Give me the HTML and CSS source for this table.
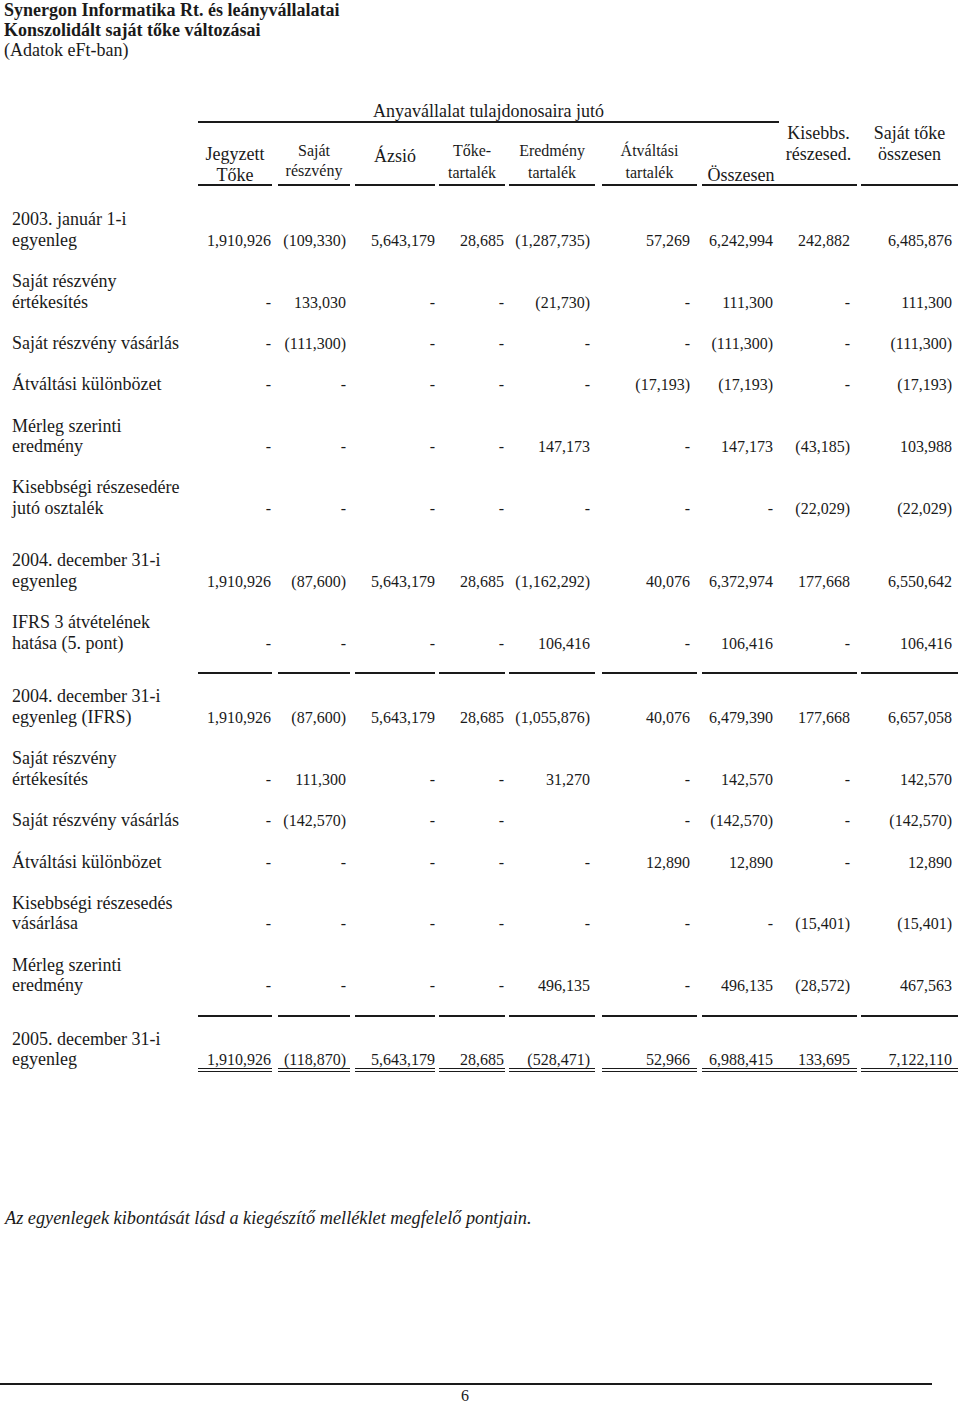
FILE: index.html
```html
<!DOCTYPE html>
<html lang="hu">
<head>
<meta charset="utf-8">
<title>Synergon Informatika Rt. – Konszolidált saját tőke változásai</title>
<link rel="stylesheet" href="styles.css">
</head>
<body>
<div class="page">
  <header class="doc-head">
    <div class="doc-title">Synergon Informatika Rt. és leányvállalatai</div>
    <div class="doc-title">Konszolidált saját tőke változásai</div>
    <div class="doc-unit">(Adatok eFt-ban)</div>
  </header>

  <section class="sheet">
    <div class="thead">
      <div class="th-group">Anyavállalat tulajdonosaira jutó</div>
      <div class="th c1 big low"><span>Jegyzett<br>Tőke</span></div>
      <div class="th c2 small"><span>Saját<br>részvény</span></div>
      <div class="th c3 big single"><span>Ázsió</span></div>
      <div class="th c4 small tall"><span>Tőke-<br>tartalék</span></div>
      <div class="th c5 small tall"><span>Eredmény<br>tartalék</span></div>
      <div class="th c6 small tall"><span>Átváltási<br>tartalék</span></div>
      <div class="th c7 big low"><span>Összesen</span></div>
      <div class="th c8 big top"><span>Kisebbs.<br>részesed.</span></div>
      <div class="th c9 big top"><span>Saját tőke<br>összesen</span></div>
    </div>

    <div class="tbody">
      <div class="row">
        <div class="label">2003. január 1-i<br>egyenleg</div>
        <div class="num c1">1,910,926</div><div class="num c2">(109,330)</div><div class="num c3">5,643,179</div><div class="num c4">28,685</div><div class="num c5">(1,287,735)</div><div class="num c6">57,269</div><div class="num c7">6,242,994</div><div class="num c8">242,882</div><div class="num c9">6,485,876</div>
      </div>
      <div class="row">
        <div class="label">Saját részvény<br>értékesítés</div>
        <div class="num c1">-</div><div class="num c2">133,030</div><div class="num c3">-</div><div class="num c4">-</div><div class="num c5">(21,730)</div><div class="num c6">-</div><div class="num c7">111,300</div><div class="num c8">-</div><div class="num c9">111,300</div>
      </div>
      <div class="row">
        <div class="label">Saját részvény vásárlás</div>
        <div class="num c1">-</div><div class="num c2">(111,300)</div><div class="num c3">-</div><div class="num c4">-</div><div class="num c5">-</div><div class="num c6">-</div><div class="num c7">(111,300)</div><div class="num c8">-</div><div class="num c9">(111,300)</div>
      </div>
      <div class="row">
        <div class="label">Átváltási különbözet</div>
        <div class="num c1">-</div><div class="num c2">-</div><div class="num c3">-</div><div class="num c4">-</div><div class="num c5">-</div><div class="num c6">(17,193)</div><div class="num c7">(17,193)</div><div class="num c8">-</div><div class="num c9">(17,193)</div>
      </div>
      <div class="row">
        <div class="label">Mérleg szerinti<br>eredmény</div>
        <div class="num c1">-</div><div class="num c2">-</div><div class="num c3">-</div><div class="num c4">-</div><div class="num c5">147,173</div><div class="num c6">-</div><div class="num c7">147,173</div><div class="num c8">(43,185)</div><div class="num c9">103,988</div>
      </div>
      <div class="row">
        <div class="label">Kisebbségi részesedére<br>jutó osztalék</div>
        <div class="num c1">-</div><div class="num c2">-</div><div class="num c3">-</div><div class="num c4">-</div><div class="num c5">-</div><div class="num c6">-</div><div class="num c7">-</div><div class="num c8">(22,029)</div><div class="num c9">(22,029)</div>
      </div>
      <div class="row spaced">
        <div class="label">2004. december 31-i<br>egyenleg</div>
        <div class="num c1">1,910,926</div><div class="num c2">(87,600)</div><div class="num c3">5,643,179</div><div class="num c4">28,685</div><div class="num c5">(1,162,292)</div><div class="num c6">40,076</div><div class="num c7">6,372,974</div><div class="num c8">177,668</div><div class="num c9">6,550,642</div>
      </div>
      <div class="row">
        <div class="label">IFRS 3 átvételének<br>hatása (5. pont)</div>
        <div class="num c1">-</div><div class="num c2">-</div><div class="num c3">-</div><div class="num c4">-</div><div class="num c5">106,416</div><div class="num c6">-</div><div class="num c7">106,416</div><div class="num c8">-</div><div class="num c9">106,416</div>
      </div>
      <div class="row rule">
        <div class="label"></div>
        <div class="cell lined c1"></div><div class="cell lined c2"></div><div class="cell lined c3"></div><div class="cell lined c4"></div><div class="cell lined c5"></div><div class="cell lined c6"></div><div class="cell lined c7"></div><div class="cell lined c8"></div><div class="cell lined c9"></div>
      </div>
      <div class="row">
        <div class="label">2004. december 31-i<br>egyenleg (IFRS)</div>
        <div class="num c1">1,910,926</div><div class="num c2">(87,600)</div><div class="num c3">5,643,179</div><div class="num c4">28,685</div><div class="num c5">(1,055,876)</div><div class="num c6">40,076</div><div class="num c7">6,479,390</div><div class="num c8">177,668</div><div class="num c9">6,657,058</div>
      </div>
      <div class="row">
        <div class="label">Saját részvény<br>értékesítés</div>
        <div class="num c1">-</div><div class="num c2">111,300</div><div class="num c3">-</div><div class="num c4">-</div><div class="num c5">31,270</div><div class="num c6">-</div><div class="num c7">142,570</div><div class="num c8">-</div><div class="num c9">142,570</div>
      </div>
      <div class="row">
        <div class="label">Saját részvény vásárlás</div>
        <div class="num c1">-</div><div class="num c2">(142,570)</div><div class="num c3">-</div><div class="num c4">-</div><div class="num c5"></div><div class="num c6">-</div><div class="num c7">(142,570)</div><div class="num c8">-</div><div class="num c9">(142,570)</div>
      </div>
      <div class="row">
        <div class="label">Átváltási különbözet</div>
        <div class="num c1">-</div><div class="num c2">-</div><div class="num c3">-</div><div class="num c4">-</div><div class="num c5">-</div><div class="num c6">12,890</div><div class="num c7">12,890</div><div class="num c8">-</div><div class="num c9">12,890</div>
      </div>
      <div class="row">
        <div class="label">Kisebbségi részesedés<br>vásárlása</div>
        <div class="num c1">-</div><div class="num c2">-</div><div class="num c3">-</div><div class="num c4">-</div><div class="num c5">-</div><div class="num c6">-</div><div class="num c7">-</div><div class="num c8">(15,401)</div><div class="num c9">(15,401)</div>
      </div>
      <div class="row">
        <div class="label">Mérleg szerinti<br>eredmény</div>
        <div class="num c1">-</div><div class="num c2">-</div><div class="num c3">-</div><div class="num c4">-</div><div class="num c5">496,135</div><div class="num c6">-</div><div class="num c7">496,135</div><div class="num c8">(28,572)</div><div class="num c9">467,563</div>
      </div>
      <div class="row rule">
        <div class="label"></div>
        <div class="cell lined c1"></div><div class="cell lined c2"></div><div class="cell lined c3"></div><div class="cell lined c4"></div><div class="cell lined c5"></div><div class="cell lined c6"></div><div class="cell lined c7"></div><div class="cell lined c8"></div><div class="cell lined c9"></div>
      </div>
      <div class="row total">
        <div class="label">2005. december 31-i<br>egyenleg</div>
        <div class="num c1">1,910,926</div><div class="num c2">(118,870)</div><div class="num c3">5,643,179</div><div class="num c4">28,685</div><div class="num c5">(528,471)</div><div class="num c6">52,966</div><div class="num c7">6,988,415</div><div class="num c8">133,695</div><div class="num c9">7,122,110</div>
      </div>
    </div>
  </section>

  <p class="note">Az egyenlegek kibontását lásd a kiegészítő melléklet megfelelő pontjain.</p>

  <footer class="page-foot">
    <span class="page-no">6</span>
  </footer>
</div>
</body>
</html>
```

FILE: styles.css
```css
:root {
  --cols: 198px 80px 77px 84px 70px 93px 100px 78px 81px 99px;
  --ink: #1a1a1a;
  --lh: 20.65px;
}

* { box-sizing: border-box; }

html, body {
  margin: 0;
  padding: 0;
  background: #fff;
}

body {
  font-family: "Liberation Serif", "Times New Roman", serif;
  color: var(--ink);
}

.page {
  width: 960px;
  height: 1407px;
  overflow: hidden;
}

/* Document heading */
.doc-head {
  padding-left: 4px;
  font-size: 18px;
  line-height: 20px;
}
.doc-title { font-weight: bold; }

/* Column settings: --gap = space after the underline, --pr = right padding of figures */
.c1 { --gap: 6px; --pr: 7px; }
.c2 { --gap: 5px; --pr: 9px; }
.c3 { --gap: 4px; --pr: 4px; }
.c4 { --gap: 4px; --pr: 5px; }
.c5 { --gap: 7px; --pr: 12px; }
.c6 { --gap: 5px; --pr: 12px; }
.c7 { --gap: 0px; --pr: 7px; }
.c8 { --gap: 4px; --pr: 11px; }
.c9 { --gap: 2px; --pr: 8px; }

/* Header */
.sheet { margin-top: 41px; }

.thead {
  display: grid;
  grid-template-columns: var(--cols);
  grid-template-rows: 22px 63px;
}

.th-group {
  grid-row: 1;
  grid-column: 2 / 9;
  margin-right: 1px;
  text-align: center;
  font-size: 18px;
  line-height: 20px;
  border-bottom: 2px solid var(--ink);
}

.th {
  grid-row: 2;
  display: flex;
  flex-direction: column;
  justify-content: flex-end;
  align-items: center;
  text-align: center;
  margin-right: var(--gap);
  border-bottom: 2px solid var(--ink);
  white-space: nowrap;
}
.th.c1 { grid-column: 2; }
.th.c2 { grid-column: 3; }
.th.c3 { grid-column: 4; }
.th.c4 { grid-column: 5; }
.th.c5 { grid-column: 6; }
.th.c6 { grid-column: 7; }
.th.c7 { grid-column: 8; }
.th.c8 { grid-column: 9; }
.th.c9 { grid-column: 10; }

.th.big { font-size: 18px; line-height: 20px; }
.th.low { line-height: 21px; }
.th.low > span { margin-bottom: -2px; }
.th.small { font-size: 16px; line-height: 20px; padding-bottom: 3px; }
.th.small.tall { line-height: 22px; padding-bottom: 0; }
.th.single { padding-bottom: 18px; }
.th.top { justify-content: flex-start; line-height: 21px; }

/* Body rows */
.tbody {
  display: flex;
  flex-direction: column;
  margin-top: 23px;
}

.row {
  display: grid;
  grid-template-columns: var(--cols);
  align-items: end;
  align-items: last baseline;
  margin-bottom: var(--lh);
}
.row.spaced { margin-top: 11px; }

.label {
  padding-left: 12px;
  font-size: 18px;
  line-height: var(--lh);
  white-space: nowrap;
}

.num {
  font-size: 16px;
  line-height: 16px;
  text-align: right;
  padding-right: var(--pr);
  white-space: nowrap;
}

.row.rule {
  align-items: stretch;
  margin-top: -2px;
  margin-bottom: 12px;
}
.cell.lined {
  height: 2px;
  margin-right: var(--gap);
  border-bottom: 2px solid var(--ink);
}

.row.total { margin-bottom: 0; }
.row.total .num {
  margin-right: var(--gap);
  padding-right: calc(var(--pr) - var(--gap));
  border-bottom: 4px double var(--ink);
}

/* Footnote */
.note {
  margin: 136px 0 0 0;
  padding-left: 5px;
  font-size: 18.3px;
  line-height: 20px;
  font-style: italic;
}

/* Page footer */
.page-foot {
  margin: 155px 0 0 0;
  width: 932px;
  border-top: 2px solid var(--ink);
  padding: 3px 0 0 461px;
  font-size: 16px;
  line-height: 16px;
}
```
